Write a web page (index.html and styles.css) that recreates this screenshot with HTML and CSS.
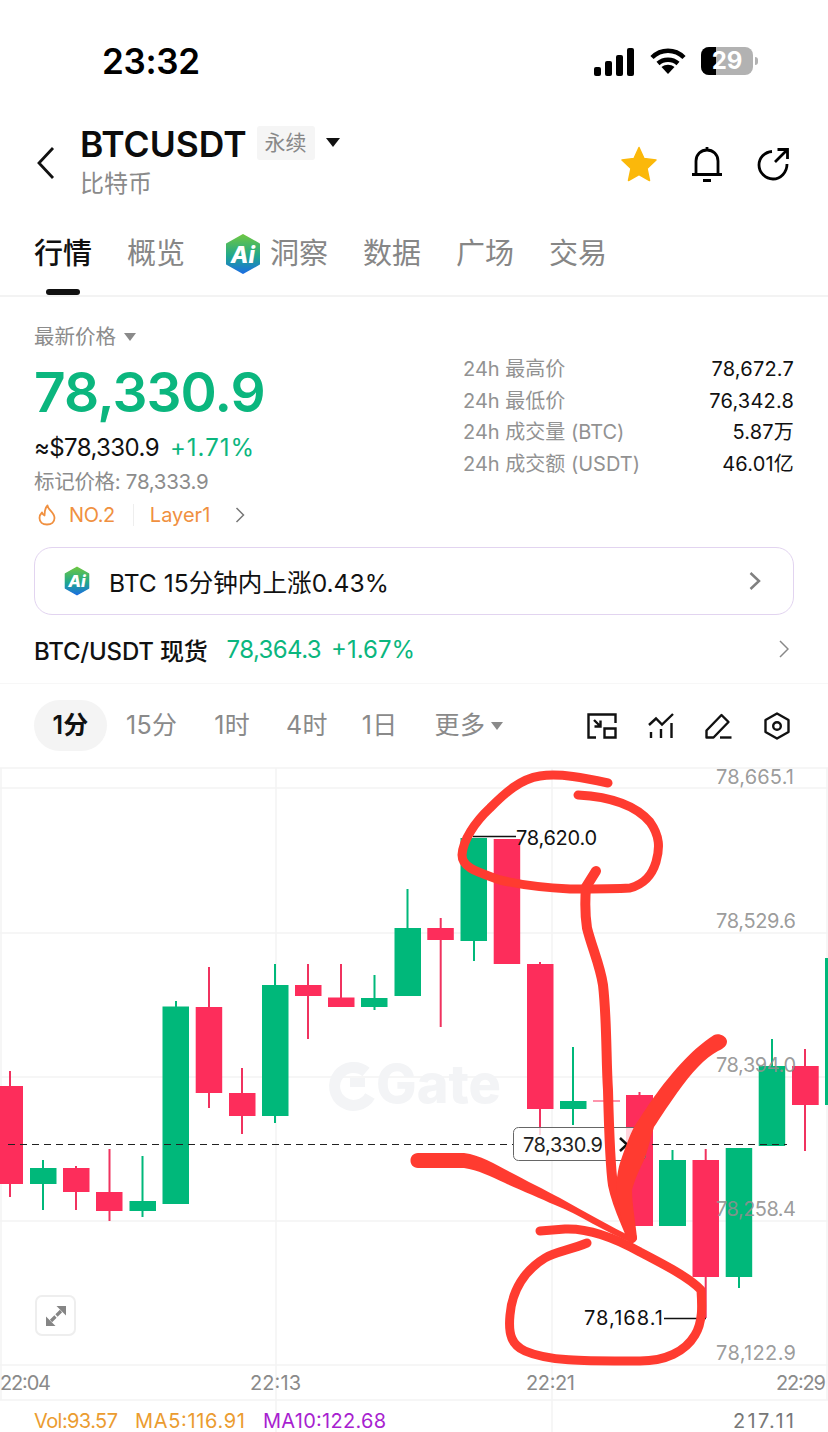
FILE: index.html
```html
<!DOCTYPE html>
<html lang="zh">
<head>
    <meta charset="UTF-8">
    <meta name="viewport" content="width=device-width, initial-scale=1.0">
    <title>BTCUSDT</title>
    <link rel="stylesheet" href="styles.css">
</head>
<body>
<div class="page">

    <!-- Status bar -->
    <div class="status-bar">
        <span class="clock">23:32</span>
        <div class="status-icons">
            <svg class="ico-signal" width="41" height="28" viewBox="0 0 41 28">
                <rect x="0" y="19" width="7" height="9" rx="2"/>
                <rect x="11" y="13" width="7" height="15" rx="2"/>
                <rect x="22" y="7" width="7" height="21" rx="2"/>
                <rect x="33" y="0" width="7" height="28" rx="2"/>
            </svg>
            <svg class="ico-wifi" width="36" height="27" viewBox="0 0 36 27">
                <path d="M2 10.5C11 1.5 25 1.500 34 10.500M8 16.500C13.500 11.500 22.500 11.500 28 16.500" fill="none" stroke="#000" stroke-width="4.500"/>
                <path d="M11.500 20C15.500 17 20.500 17 24.500 20L18 27Z" fill="#000"/>
            </svg>
            <div class="battery">
                <div class="battery-level"></div>
                <span class="battery-num">29</span>
            </div>
            <span class="battery-nub"></span>
        </div>
    </div>

    <!-- Symbol header -->
    <div class="symbol-header">
        <svg class="ico-back" width="18" height="34" viewBox="0 0 18 34">
            <path d="M16 2L2 17L16 32" fill="none" stroke="#111" stroke-width="2.800"/>
        </svg>
        <div class="symbol-names">
            <div class="symbol-top">
                <span class="symbol-code">BTCUSDT</span>
                <span class="symbol-badge">永续</span>
                <span class="tri tri-dark"></span>
            </div>
            <div class="symbol-sub">比特币</div>
        </div>
        <div class="symbol-actions">
            <svg width="36" height="36" viewBox="0 0 36 36">
                <path d="M18 1.500L23 12.500L35 14L26 22.500L28.500 34.500L18 28.500L7.500 34.500L10 22.500L1 14L13 12.500Z" fill="#fbb80a" stroke="#fbb80a" stroke-width="1.500" stroke-linejoin="round"/>
            </svg>
            <svg width="32" height="36" viewBox="0 0 32 36">
                <path d="M5 28V15C5 8.500 10 4 16 4C22 4 27 8.500 27 15V28M1 28.500H31M16 1V4M12 34.500H20" fill="none" stroke="#000" stroke-width="2.800"/>
            </svg>
            <svg width="32" height="34" viewBox="0 0 32 34">
                <path d="M15 4.500C7.500 5 2 11 2 18C2 25.500 8.500 32 16 32C23.500 32 30 25.500 30 17" fill="none" stroke="#000" stroke-width="2.800"/>
                <path d="M18 15L30 3M20.500 2.500H30.500V12" fill="none" stroke="#000" stroke-width="2.800"/>
            </svg>
        </div>
    </div>

    <!-- Tabs -->
    <div class="tabs">
        <span class="tab tab-active">行情</span>
        <span class="tab">概览</span>
        <span class="tab tab-ai">
            <svg width="36" height="40" viewBox="0 0 36 40">
                <defs>
                    <linearGradient id="aiGrad" x1="0" y1="0" x2="0" y2="1">
                        <stop offset="0" stop-color="#6cc644"/>
                        <stop offset="0.55" stop-color="#20a88c"/>
                        <stop offset="1" stop-color="#1c6fe0"/>
                    </linearGradient>
                </defs>
                <path d="M18 1L34 10V30L18 39L2 30V10Z" fill="url(#aiGrad)" stroke="url(#aiGrad)" stroke-width="2" stroke-linejoin="round"/>
                <text class="ai-mark" x="18" y="29" font-size="23">Ai</text>
            </svg>
            洞察
        </span>
        <span class="tab">数据</span>
        <span class="tab">广场</span>
        <span class="tab">交易</span>
        <span class="tab-bar"></span>
    </div>

    <!-- Price block -->
    <div class="price-block">
        <div class="price-left">
            <div class="latest-label">最新价格 <span class="tri tri-grey"></span></div>
            <div class="latest-price">78,330.9</div>
            <div class="usd-row"><span class="usd">≈$78,330.9</span><span class="up-text">+1.71%</span></div>
            <div class="mark-price">标记价格: 78,333.9</div>
            <div class="tags-row">
                <svg width="18" height="22" viewBox="0 0 18 22">
                    <path d="M9.500 1.500C10 6 16.500 8.500 16.500 14C16.500 18 13.500 20.500 9 20.500C4.500 20.500 1.500 18 1.500 14C1.500 11.500 2.500 10 4 8.500C4.500 10 5 11 6.500 11.500C6.500 8 7 4 9.500 1.500Z" fill="none" stroke="#f09040" stroke-width="1.800" stroke-linejoin="round"/>
                </svg>
                <span class="tag-rank">NO.2</span>
                <span class="tag-line"></span>
                <span class="tag-name">Layer1</span>
                <svg width="10" height="16" viewBox="0 0 10 16">
                    <path d="M1.500 1L8.500 8L1.500 15" fill="none" stroke="#777" stroke-width="1.500"/>
                </svg>
            </div>
        </div>
        <div class="stats">
            <div class="stat"><span class="stat-key">24h 最高价</span><span class="stat-val">78,672.7</span></div>
            <div class="stat"><span class="stat-key">24h 最低价</span><span class="stat-val">76,342.8</span></div>
            <div class="stat"><span class="stat-key">24h 成交量 (BTC)</span><span class="stat-val">5.87万</span></div>
            <div class="stat"><span class="stat-key">24h 成交额 (USDT)</span><span class="stat-val">46.01亿</span></div>
        </div>
    </div>

    <!-- AI insight card -->
    <div class="ai-card">
        <svg width="26" height="30" viewBox="0 0 36 40">
            <path d="M18 1L34 10V30L18 39L2 30V10Z" fill="url(#aiGrad)" stroke="url(#aiGrad)" stroke-width="2" stroke-linejoin="round"/>
            <text class="ai-mark" x="18" y="29" font-size="23">Ai</text>
        </svg>
        <span class="ai-card-text">BTC 15分钟内上涨0.43%</span>
        <svg width="12" height="20" viewBox="0 0 12 20">
            <path d="M1.500 2L10 10L1.500 18" fill="none" stroke="#808080" stroke-width="2.500"/>
        </svg>
    </div>

    <!-- Spot row -->
    <div class="spot-row">
        <span class="spot-name">BTC/USDT 现货</span>
        <span class="spot-price">78,364.3</span>
        <span class="spot-change">+1.67%</span>
        <svg class="spot-arrow" width="10" height="18" viewBox="0 0 10 18">
            <path d="M1 1L9 9L1 17" fill="none" stroke="#888" stroke-width="1.500"/>
        </svg>
    </div>

    <!-- Interval bar -->
    <div class="interval-bar">
        <span class="interval interval-active">1分</span>
        <span class="interval i-15">15分</span>
        <span class="interval i-1h">1时</span>
        <span class="interval i-4h">4时</span>
        <span class="interval i-1d">1日</span>
        <span class="interval i-more">更多 <span class="tri tri-grey"></span></span>
        <div class="chart-tools">
            <svg width="30" height="26" viewBox="0 0 30 26">
                <path d="M9 24.500H1.500V1.500H28.500V10" fill="none" stroke="#111" stroke-width="2.400"/>
                <path d="M17.500 15.500H28.500V24.500H17.500Z" fill="none" stroke="#111" stroke-width="2.400"/>
                <path d="M7 7L13.500 13.500M13.500 7.500V13.500H7.500" fill="none" stroke="#111" stroke-width="2.400"/>
            </svg>
            <svg width="26" height="26" viewBox="0 0 26 26">
                <path d="M1 12L8 5.500L14 11.500L25 1" fill="none" stroke="#111" stroke-width="2.400"/>
                <path d="M3 19V25M13 16V25M23.500 10V25" fill="none" stroke="#111" stroke-width="2.400"/>
            </svg>
            <svg width="28" height="26" viewBox="0 0 28 26">
                <path d="M1.500 24.500V17.500L16.500 2L23.500 9L8.500 24.500Z" fill="none" stroke="#111" stroke-width="2.400" stroke-linejoin="round"/>
                <path d="M15 24.500H26.500" fill="none" stroke="#111" stroke-width="2.400"/>
            </svg>
            <svg width="26" height="28" viewBox="0 0 26 28">
                <path d="M13 1.500L24.500 8V20L13 26.500L1.500 20V8Z" fill="none" stroke="#111" stroke-width="2.400" stroke-linejoin="round"/>
                <circle cx="13" cy="14" r="3.800" fill="none" stroke="#111" stroke-width="2.400"/>
            </svg>
        </div>
    </div>

    <!-- Candle chart: coordinates below are page pixels -->
    <div class="chart">
        <svg class="chart-svg" width="828" height="664" viewBox="0 768 828 664">
            <path class="grid" d="M0 768H828M0 788H828M0 933H828M0 1077H828M0 1221H828M0 1365H828M0 1400H828M1 768V1400M276 768V1432M552 768V1432M827 768V1400"/>

            <g class="watermark">
                <path class="wm-arc" d="M366 1072A19 19 0 1 0 370 1096"/>
                <rect x="350" y="1078" width="15" height="9"/>
                <text class="wm-text" x="376" y="1103">Gate</text>
            </g>

            <g class="down">
                <path d="M10 1071V1197M76 1166V1210M109.500 1149V1221M209 967V1108M242 1068V1134M308 964V1039M341 964V1007M440.700 918V1027M540 962V1135M639.500 1092V1226M705.700 1149V1318M805 1049V1151"/>
                <rect x="-4" y="1086" width="27" height="98"/>
                <rect x="63" y="1168" width="26.500" height="24"/>
                <rect x="96" y="1192" width="26.500" height="19"/>
                <rect x="195.700" y="1007" width="26.500" height="86"/>
                <rect x="229" y="1093" width="26.500" height="23"/>
                <rect x="295" y="985" width="26.500" height="11"/>
                <rect x="328" y="997.500" width="26.500" height="9.500"/>
                <rect x="427.300" y="928" width="26.500" height="12"/>
                <rect x="493.700" y="839" width="26.500" height="125"/>
                <rect x="527" y="964" width="26.500" height="145"/>
                <rect x="593" y="1100.500" width="27" height="1"/>
                <rect x="626" y="1095" width="27" height="131"/>
                <rect x="692.500" y="1160" width="26.500" height="117"/>
                <rect x="792" y="1066" width="26.700" height="39"/>
            </g>
            <g class="up">
                <path d="M43 1160V1210M142.500 1156V1217M176 1001V1204M275 964V1123M374.500 975V1010M407.500 889V996M474 838V961M573 1047V1125M672.500 1150V1226M739 1148V1288M772 1039V1146"/>
                <rect x="30" y="1168" width="26.500" height="16"/>
                <rect x="129.500" y="1201" width="26.500" height="10"/>
                <rect x="162.500" y="1006.500" width="26.500" height="197.500"/>
                <rect x="262" y="985" width="26.500" height="131"/>
                <rect x="361" y="998" width="26.500" height="9"/>
                <rect x="394.500" y="928" width="26.500" height="68"/>
                <rect x="460.500" y="838" width="26.500" height="103"/>
                <rect x="560" y="1101" width="26.500" height="8"/>
                <rect x="659" y="1160" width="27" height="66"/>
                <rect x="725.700" y="1148" width="26.500" height="129"/>
                <rect x="758.700" y="1066" width="26.500" height="80"/>
                <rect x="825" y="958" width="5" height="147"/>
            </g>

            <path class="last-line" d="M8 1144.500H513M640 1144.500H787"/>
            <rect class="last-tag" x="513.500" y="1127.500" width="132" height="33" rx="5"/>
            <text class="last-text" x="523" y="1151.500" textLength="80">78,330.9</text>
            <path class="last-arrow" d="M620 1138L627 1144.500L620 1151"/>

            <text class="axis-price" x="716" y="784" textLength="78">78,665.1</text>
            <text class="axis-price" x="716" y="928" textLength="80">78,529.6</text>
            <text class="axis-price" x="716" y="1072" textLength="80">78,394.0</text>
            <text class="axis-price" x="716" y="1216" textLength="80">78,258.4</text>
            <text class="axis-price" x="716" y="1360" textLength="80">78,122.9</text>

            <text class="axis-time" x="0" y="1390" textLength="51">22:04</text>
            <text class="axis-time" x="250" y="1390" textLength="51">22:13</text>
            <text class="axis-time" x="526" y="1390" textLength="49">22:21</text>
            <text class="axis-time" x="776" y="1390" textLength="50">22:29</text>

            <path class="peak-line" d="M473 836.500H516M664 1318.500H706"/>
            <text class="peak-text" x="516" y="845" textLength="81">78,620.0</text>
            <text class="peak-text" x="584" y="1325" textLength="79">78,168.1</text>

            <text class="ma-vol" x="34" y="1428" textLength="84">Vol:93.57</text>
            <text class="ma-vol" x="135" y="1428" textLength="110">MA5:116.91</text>
            <text class="ma-ten" x="263" y="1428" textLength="123">MA10:122.68</text>
            <text class="vol-val" x="733" y="1428" textLength="61">217.11</text>

            <!-- hand drawn red marks -->
            <g class="ink">
                <path d="M608 783C585 778 560 773 540 776C520 779 505 793 490 808C475 822 463 840 462 855C462 868 478 872 500 880C525 886 550 888 570 889C590 889 615 889 630 888C645 884 652 875 656 862C660 848 660 836 650 822C638 808 615 797 578 795"/>
                <path class="ink-wide" d="M596 871L586 887C585 900 585 915 587 928C592 948 600 965 603 985C607 1020 606 1060 608 1090C609 1130 610 1165 613 1185C617 1205 625 1220 632 1238"/>
                <path d="M587 1243C570 1250 555 1252 545 1258C525 1270 512 1290 510 1315C508 1335 512 1345 525 1351C550 1362 590 1361 640 1361C665 1361 685 1352 695 1335C703 1322 702 1305 701 1290C690 1278 665 1265 640 1252C615 1238 590 1228 565 1229L540 1231"/>
            </g>
            <path class="ink-fill" d="M714 1035C718 1033 726 1035 727 1041C727 1046 724 1048 718 1051C705 1058 692 1072 677 1093C665 1110 660 1118 654 1127C650 1140 648 1150 644 1160C638 1172 634 1182 632 1190C632 1205 636 1225 637 1238C636 1243 631 1243 628 1240C622 1225 618 1205 616 1185C618 1170 619 1165 621 1160C625 1148 630 1135 634 1127C642 1115 650 1102 657 1093C668 1078 690 1050 714 1035Z"/>
            <path class="ink-fill" d="M418 1153H464C480 1155 495 1164 510 1172C525 1180 545 1190 560 1198C585 1212 610 1226 634 1238L632 1243C605 1232 580 1215 555 1205C540 1198 520 1190 505 1183C490 1176 478 1170 464 1168H418C408 1168 408 1153 418 1153Z"/>
        </svg>

        <div class="expand-btn">
            <svg width="22" height="22" viewBox="0 0 22 22">
                <path d="M11.500 1H21V10.500Z" fill="#858585"/>
                <path d="M10.500 21H1V11.500Z" fill="#858585"/>
                <path d="M16 6L11.500 10.500M6 16L10.500 11.500" fill="none" stroke="#858585" stroke-width="3.200"/>
            </svg>
        </div>
    </div>

</div>
</body>
</html>
```

FILE: styles.css
```css
/* Global Styling */
* {
    margin: 0;
    padding: 0;
    box-sizing: border-box;
}

body {
    background: #fff;
    color: #111;
    font-family: Inter, "Noto Sans CJK SC", sans-serif;
    overflow: hidden;
}

.page {
    width: 828px;
    height: 1432px;
    overflow: hidden;
}

svg {
    display: block;
    flex-shrink: 0;
}

/* Small triangles */
.tri {
    display: inline-block;
    width: 0;
    height: 0;
    border-left: 6px solid transparent;
    border-right: 6px solid transparent;
    border-top: 8px solid #8a8a8a;
}

.tri-dark {
    border-left-width: 7px;
    border-right-width: 7px;
    border-top: 9px solid #111;
}

/* Status bar */
.status-bar {
    height: 122px;
    padding: 47px 0 0 102px;
    display: flex;
    justify-content: space-between;
    align-items: flex-start;
}

.clock {
    font-size: 35px;
    font-weight: 600;
    letter-spacing: -0.3px;
    line-height: 29px;
    color: #000;
}

.status-icons {
    display: flex;
    align-items: flex-start;
    padding-right: 70px;
    position: relative;
}

.ico-signal {
    margin: 1px 15px 0 0;
}

.ico-wifi {
    margin: 0 15px 0 0;
}

.battery {
    width: 52px;
    height: 28px;
    background: #b2b2b2;
    border-radius: 8px;
    overflow: hidden;
    position: relative;
}

.battery-level {
    width: 15px;
    height: 28px;
    background: #000;
}

.battery-num {
    position: absolute;
    left: 0;
    right: 0;
    top: 0;
    text-align: center;
    color: #fff;
    font-size: 24px;
    font-weight: 700;
    line-height: 28px;
}

.battery-nub {
    width: 3px;
    height: 8px;
    margin: 10px 0 0 2px;
    background: #b2b2b2;
    border-radius: 0 3px 3px 0;
}

/* Symbol header */
.symbol-header {
    height: 76px;
    padding: 0 39px 0 37px;
    display: flex;
    align-items: center;
}

.ico-back {
    margin-top: 6px;
}

.symbol-names {
    margin-left: 25px;
    flex: 1;
}

.symbol-top {
    display: flex;
    align-items: center;
    height: 40px;
}

.symbol-code {
    font-size: 35.400px;
    font-weight: 600;
    line-height: 40px;
    color: #0c0c0c;
}

.symbol-badge {
    margin: 0 0 3px 10px;
    width: 58px;
    height: 34px;
    background: #f5f5f5;
    border-radius: 3px;
    text-align: center;
    font-size: 21px;
    line-height: 34px;
    color: #888;
}

.symbol-top .tri {
    margin: 0 0 5px 11px;
}

.symbol-sub {
    font-size: 24px;
    line-height: 30px;
    color: #8a8a8a;
    margin: 4px 0 -3px;
}

.symbol-actions {
    display: flex;
    align-items: center;
    gap: 34px;
    margin-top: 8px;
}

/* Tabs */
.tabs {
    position: relative;
    height: 99px;
    padding: 35px 0 0 34px;
    display: flex;
    align-items: flex-start;
    gap: 35px;
    border-bottom: 2px solid #f3f3f3;
}

.tab {
    font-size: 29px;
    line-height: 42px;
    color: #868686;
    display: flex;
    align-items: center;
    gap: 9px;
}

.tab-active {
    color: #111;
    font-weight: 500;
}

.tab-ai {
    margin-left: 5px;
}

.tab-bar {
    position: absolute;
    left: 46px;
    bottom: 0;
    width: 34px;
    height: 6px;
    border-radius: 3px;
    background: #111;
}

/* Price block */
.price-block {
    height: 250px;
    padding: 25px 34px 0;
    display: flex;
    justify-content: space-between;
}

.latest-label {
    font-size: 20.500px;
    line-height: 30px;
    color: #8c8c8c;
    display: flex;
    align-items: center;
    gap: 8px;
}

.latest-price {
    font-size: 55px;
    font-weight: 600;
    line-height: 62px;
    letter-spacing: -0.900px;
    color: #0bb67e;
    margin-top: 9px;
}

.usd-row {
    display: flex;
    gap: 11px;
    font-size: 24px;
    line-height: 30px;
    margin-top: 10px;
}

.usd {
    color: #111;
    letter-spacing: -0.600px;
}

.up-text {
    color: #0bb67e;
    letter-spacing: 1px;
}

.mark-price {
    font-size: 20.500px;
    line-height: 30px;
    margin-top: 4px;
    color: #8c8c8c;
    letter-spacing: -0.300px;
}

.tags-row {
    display: flex;
    align-items: center;
    height: 30px;
    margin-top: 3px;
    padding-left: 4px;
    font-size: 20px;
    color: #f09040;
}

.tag-rank {
    margin-left: 13px;
    letter-spacing: -0.400px;
}

.tag-line {
    width: 1px;
    height: 22px;
    margin: 0 16px 0 18px;
    background: #eeeeee;
}

.tags-row svg:last-child {
    margin-left: 25px;
}

.stats {
    width: 331px;
    padding-top: 32px;
    display: flex;
    flex-direction: column;
    gap: 1.500px;
}

.stat {
    display: flex;
    justify-content: space-between;
    font-size: 20px;
    line-height: 30px;
}

.stat-key {
    color: #929292;
}

.stat-val {
    color: #111;
    letter-spacing: 0.200px;
}

/* AI card */
.ai-card {
    margin: 0 34px;
    height: 68px;
    padding: 0 32px 0 29px;
    display: flex;
    align-items: center;
    border: 1.500px solid #e2d4f0;
    border-radius: 18px;
}

.ai-card-text {
    flex: 1;
    margin-left: 19px;
    font-size: 24.600px;
    color: #111;
}

.ai-mark {
    font-family: Inter, sans-serif;
    font-weight: 800;
    font-style: italic;
    fill: #fff;
    text-anchor: middle;
}

/* Spot row */
.spot-row {
    height: 69px;
    padding: 0 39px 0 34px;
    display: flex;
    align-items: center;
    font-size: 24px;
    border-bottom: 1px solid #f7f7f7;
}

.spot-name {
    font-weight: 500;
    color: #111;
    letter-spacing: -0.200px;
}

.spot-price {
    margin-left: 19px;
    color: #0bb67e;
    letter-spacing: -0.600px;
}

.spot-change {
    margin-left: 10px;
    color: #0bb67e;
    flex: 1;
}

/* Interval bar */
.interval-bar {
    height: 84px;
    padding: 16px 38px 0 34px;
    display: flex;
    align-items: flex-start;
}

.interval {
    font-size: 25px;
    letter-spacing: 0.300px;
    line-height: 51px;
    color: #8a8a8a;
}

.interval-active {
    width: 73px;
    height: 51px;
    text-align: center;
    background: #f4f4f4;
    border-radius: 26px;
    color: #111;
    font-weight: 600;
}

.i-15 {
    margin-left: 19px;
}

.i-1h {
    margin-left: 37px;
}

.i-4h {
    margin-left: 36px;
}

.i-1d {
    margin-left: 34px;
}

.i-more {
    margin-left: 37px;
    display: flex;
    align-items: center;
    gap: 6px;
}

.chart-tools {
    margin-left: auto;
    display: flex;
    align-items: center;
    gap: 31px;
    height: 51px;
}

/* Chart */
.chart {
    position: relative;
    height: 664px;
}

.chart-svg {
    display: block;
    overflow: visible;
}

.grid {
    fill: none;
    stroke: #f4f4f4;
    stroke-width: 1.500;
}

.watermark {
    fill: #f3f4f6;
}

.wm-arc {
    fill: none;
    stroke: #f3f4f6;
    stroke-width: 11;
}

.wm-text {
    font-size: 54px;
    font-weight: 800;
}

.down {
    fill: #fd2d5b;
    stroke: none;
}

.down path {
    fill: none;
    stroke: #f0325f;
    stroke-width: 2;
}

.up {
    fill: #00b87a;
    stroke: none;
}

.up path {
    fill: none;
    stroke: #00b87a;
    stroke-width: 2;
}

.last-line {
    fill: none;
    stroke: #222;
    stroke-width: 1.200;
    stroke-dasharray: 7 5;
}

.last-tag {
    fill: rgba(255, 255, 255, 0.8);
    stroke: #666;
    stroke-width: 1;
}

.last-text {
    font-size: 20px;
    fill: #222;
}

.last-arrow {
    fill: none;
    stroke: #111;
    stroke-width: 2.500;
}

.axis-price {
    font-size: 20px;
    fill: #8f8f8f;
    fill-opacity: 0.9;
}

.axis-time {
    font-size: 20px;
    fill: #8a8a8a;
}

.peak-line {
    fill: none;
    stroke: #111;
    stroke-width: 1.500;
}

.peak-text {
    font-size: 20px;
    fill: #111;
}

.ma-vol {
    font-size: 20px;
    fill: #eb9c30;
}

.ma-ten {
    font-size: 20px;
    fill: #a81fd0;
}

.vol-val {
    font-size: 20px;
    fill: #777;
}

.ink {
    fill: none;
    stroke: #ff3b30;
    stroke-width: 9;
    stroke-linecap: round;
    stroke-linejoin: round;
}

.ink .ink-wide {
    stroke-width: 10;
}

.ink-fill {
    fill: #ff3b30;
}

.expand-btn {
    position: absolute;
    left: 35px;
    top: 527px;
    width: 41px;
    height: 41px;
    background: #fff;
    border: 2px solid #eeeeee;
    border-radius: 7px;
    display: flex;
    align-items: center;
    justify-content: center;
}
```
